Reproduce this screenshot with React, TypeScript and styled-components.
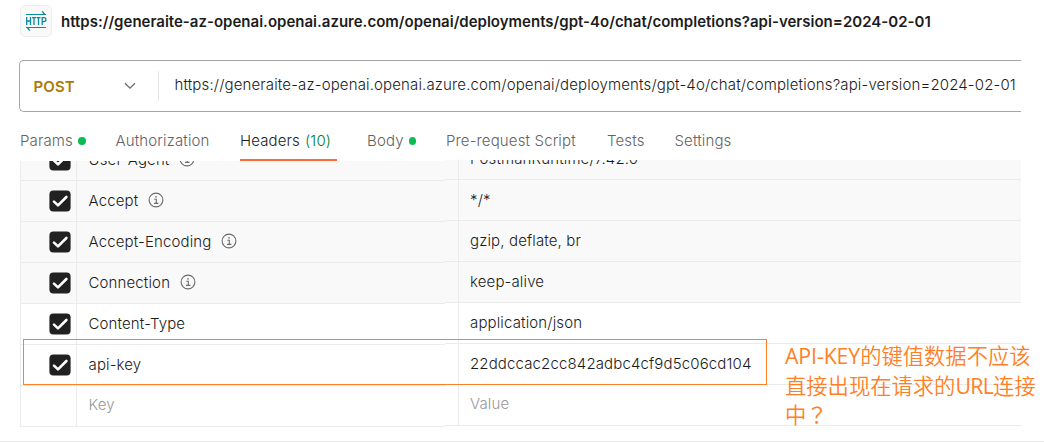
import React from "react";
import styled, { createGlobalStyle } from "styled-components";

const Global = createGlobalStyle`
  * { box-sizing: border-box; }
  html, body { margin: 0; padding: 0; background: #fff; }
  body {
    font-family: Inter, "Liberation Sans", sans-serif;
    font-size: 15px;
    font-weight: 350;
    letter-spacing: 0.137px;
    color: #1c1c1c;
    overflow: hidden;
  }
`;

const Page = styled.main`
  position: relative;
  width: 1044px;
  height: 443px;
  overflow: hidden;
  display: flex;
  flex-direction: column;
  background: #fff;
`;

const TitleBar = styled.header`
  height: 60px;
  padding: 5px 0 0 20px;
  display: flex;
  align-items: flex-start;
  gap: 9px;
`;

const ProtocolBadge = styled.span`
  width: 32px;
  height: 32px;
  border: 1px solid #ededed;
  border-radius: 5px;
  background: #f9f9f9;
  display: flex;
  flex: none;

  svg { display: block; }
`;

const RequestName = styled.h1`
  margin: 0;
  font-size: 15px;
  font-weight: 600;
  line-height: 34px;
  white-space: nowrap;
  letter-spacing: 0.008px;
`;

const RequestBar = styled.div`
  width: 1002px;
  height: 52px;
  margin-left: 19px;
  border: 1px solid #a6a6a6;
  border-right: 0;
  border-radius: 5px 0 0 5px;
  display: flex;
  align-items: center;
  flex: none;
`;

const MethodSelect = styled.div`
  width: 139px;
  height: 30px;
  padding: 0 22px 0 13.5px;
  border-right: 1px solid #e6e6e6;
  display: flex;
  align-items: center;
  justify-content: space-between;
  color: #ad7a03;
  font-weight: 600;
`;

const UrlText = styled.span`
  padding-left: 15.5px;
  line-height: 20px;
  margin-top: -3px;
  white-space: nowrap;
`;

const Tabs = styled.nav`
  height: 49px;
  padding-left: 20px;
  display: flex;
  flex: none;
`;

const Tab = styled.span<{ $width: number; $active?: boolean }>`
  width: ${(p) => p.$width}px;
  height: 49px;
  padding-top: 19px;
  line-height: 20px;
  white-space: nowrap;
  color: ${(p) => (p.$active ? "#1c1c1c" : "#636363")};
  border-bottom: 2px solid ${(p) => (p.$active ? "#ff6c37" : "transparent")};
  display: flex;
  align-items: center;
  padding-bottom: 8px;
  margin-right: 30px;
`;

const Dot = styled.i`
  width: 8px;
  height: 8px;
  border-radius: 50%;
  background: #0cbb52;
  margin-left: 5px;
`;

const Count = styled.span`
  color: #007f31;
  margin-left: 5px;
`;

const Table = styled.section`
  width: 1001px;
  height: 280px;
  margin-left: 20px;
  display: flex;
  align-items: flex-start;
  flex: none;
`;

const KeyPane = styled.div`
  width: 425px;
  border-left: 1px solid #ebebeb;
  margin-top: 0;
`;

const ValuePane = styled.div`
  flex: 1;
  margin-top: -1px;
`;

const Row = styled.div<{ $auto?: boolean; $clipped?: boolean }>`
  height: ${(p) => (p.$clipped ? 20 : 41)}px;
  border-bottom: 1px solid #ebebeb;
  background: ${(p) => (p.$auto ? "#f9f9f9" : "#fff")};
  display: flex;
  align-items: flex-end;
  overflow: hidden;
`;

const CheckCell = styled.div`
  width: 56px;
  height: 40px;
  flex: none;
  border-right: 1px solid #ebebeb;
  display: flex;
  align-items: center;
  padding-left: 28px;
`;

const KeyCell = styled.div<{ $placeholder?: boolean }>`
  height: 40px;
  padding: 0 0 ${(p) => (p.$placeholder ? 4 : 2)}px 11.5px;
  display: flex;
  align-items: center;
  gap: 10px;
  white-space: nowrap;
  color: ${(p) => (p.$placeholder ? "#999" : "inherit")};
`;

const Gutter = styled.div`
  width: 14px;
  height: 40px;
  flex: none;
  border-right: 1px solid #ebebeb;
`;

const ValueCell = styled(KeyCell)`
  padding-left: 11px;
`;

const Footer = styled.footer`
  height: 2px;
  border-top: 1px solid #ebebeb;
`;

const Highlight = styled.div`
  position: absolute;
  left: 23px;
  top: 339px;
  width: 744px;
  height: 46px;
  border: 1px solid #ff7f27;
`;

const Note = styled.p`
  position: absolute;
  left: 785px;
  top: 341px;
  margin: 0;
  color: #ff7f27;
  font-family: "Open Sans", "Noto Sans CJK SC", sans-serif;
  font-size: 21.3px;
  font-weight: 400;
  letter-spacing: 0;
  line-height: 28.5px;
  white-space: nowrap;
`;

const NoteLatin = styled.span<{ $spacing: number }>`
  letter-spacing: ${(p) => p.$spacing}px;
`;

const NoteCjk = styled.span`
  font-family: "Noto Sans CJK SC", sans-serif;
  font-weight: 350;
`;

const NoteMark = styled.span`
  font-family: "Noto Sans CJK TC", sans-serif;
`;

const HttpIcon = () => (
  <svg width="30" height="30" viewBox="0 0 30 30" fill="none" stroke="#0b8aa0">
    <path d="M5 8.5H25M5 21.5H25" strokeWidth="1.2" />
    <path d="M20.5 5.3H22L25 9H20.5V8H22.3ZM9.5 24.7H8L5 21H9.5V22H7.7Z" fill="#0b8aa0" stroke="none" />
    <path
      d="M5.7 11V19M9.5 11V19M5.7 15H9.5M11 11.6H15M13 11.6V19M15.5 11.6H19.5M17.5 11.6V19M21.2 19V11.6H23A1.8 1.9 0 0 1 23 15.6H21.2"
      strokeWidth="1.3"
    />
  </svg>
);

const Chevron = () => (
  <svg width="12" height="8" viewBox="0 0 12 8" fill="none" stroke="#6b6b6b" strokeWidth="1.3">
    <path d="M1 1.2L6 6.2L11 1.2" />
  </svg>
);

const Checkbox = () => (
  <svg width="22" height="22" viewBox="0 0 22 22" fill="none">
    <rect x="0.4" y="0.4" width="21.2" height="21.2" rx="4" fill="#212121" />
    <path d="M5 11.6L9 15.4L17.4 7" stroke="#fff" strokeWidth="2.6" strokeLinecap="round" strokeLinejoin="round" />
  </svg>
);

const Info = () => (
  <svg width="16" height="16" viewBox="0 0 16 16" fill="none" stroke="#6b6b6b">
    <circle cx="8" cy="8" r="6.9" strokeWidth="1.1" />
    <path d="M6.3 7.3H8.3V11.4M6 11.4H10.4" strokeWidth="1.1" />
    <circle cx="8" cy="4.9" r="0.8" fill="#6b6b6b" stroke="none" />
  </svg>
);

type Header = { name: string; value: string; auto?: boolean };

const headers: Header[] = [
  { name: "User-Agent", value: "PostmanRuntime/7.42.0", auto: true },
  { name: "Accept", value: "*/*", auto: true },
  { name: "Accept-Encoding", value: "gzip, deflate, br", auto: true },
  { name: "Connection", value: "keep-alive", auto: true },
  { name: "Content-Type", value: "application/json" },
  { name: "api-key", value: "22ddccac2cc842adbc4cf9d5c06cd104" },
];

const url =
  "https://generaite-az-openai.openai.azure.com/openai/deployments/gpt-4o/chat/completions?api-version=2024-02-01";

export default function App() {
  return (
    <>
      <Global />
      <Page>
        <TitleBar>
          <ProtocolBadge><HttpIcon /></ProtocolBadge>
          <RequestName>{url}</RequestName>
        </TitleBar>
        <RequestBar>
          <MethodSelect>POST<Chevron /></MethodSelect>
          <UrlText>{url}</UrlText>
        </RequestBar>
        <Tabs>
          <Tab $width={65.5}>Params<Dot /></Tab>
          <Tab $width={94.5}>Authorization</Tab>
          <Tab $width={97} $active>Headers<Count>(10)</Count></Tab>
          <Tab $width={49}>Body<Dot /></Tab>
          <Tab $width={131}>Pre-request Script</Tab>
          <Tab $width={37.5}>Tests</Tab>
          <Tab $width={60}>Settings</Tab>
        </Tabs>
        <Table>
          <KeyPane>
            {headers.map((h, i) => (
              <Row key={h.name} $auto={h.auto} $clipped={i === 0}>
                <CheckCell><Checkbox /></CheckCell>
                <KeyCell>{h.name}{h.auto && <Info />}</KeyCell>
              </Row>
            ))}
            <Row>
              <CheckCell />
              <KeyCell $placeholder>Key</KeyCell>
            </Row>
          </KeyPane>
          <ValuePane>
            {headers.map((h, i) => (
              <Row key={h.name} $auto={h.auto} $clipped={i === 0}>
                <Gutter />
                <ValueCell>{h.value}</ValueCell>
              </Row>
            ))}
            <Row>
              <Gutter />
              <ValueCell $placeholder>Value</ValueCell>
            </Row>
          </ValuePane>
        </Table>
        <Footer />
        <Highlight />
        <Note>
          <NoteLatin $spacing={-0.1}>API-KEY</NoteLatin><NoteCjk>的键值数据不应该</NoteCjk><br />
          <NoteCjk>直接出现在请求的</NoteCjk><NoteLatin $spacing={-0.7}>URL</NoteLatin><NoteCjk>连接</NoteCjk><br />
          <NoteCjk>中</NoteCjk><NoteMark>？</NoteMark>
        </Note>
      </Page>
    </>
  );
}
